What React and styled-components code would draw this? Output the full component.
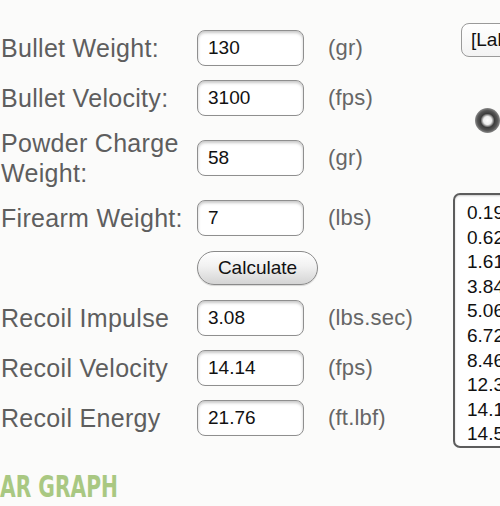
import styled, { createGlobalStyle } from "styled-components";

const GlobalStyle = createGlobalStyle`
  html, body {
    margin: 0;
    padding: 0;
    background: #fbfbfa;
    overflow: hidden;
  }
  body {
    font-family: "Liberation Sans", Arial, Helvetica, sans-serif;
  }
`;

const Page = styled.div`
  width: 500px;
  height: 506px;
  overflow: hidden;
`;

const Top = styled.div`
  display: flex;
  padding-top: 23px;
`;

const Form = styled.div`
  width: 453px;
  flex-shrink: 0;
`;

const Row = styled.div`
  display: grid;
  grid-template-columns: 197px 107px auto;
  align-items: center;
  min-height: 40px;
  padding: 5px 0;
`;

const Label = styled.div`
  padding-left: 1px;
  font-size: 25px;
  line-height: 30px;
  letter-spacing: 0.3px;
  color: #5e5e5e;
`;

const Field = styled.input`
  box-sizing: border-box;
  width: 107px;
  height: 36px;
  padding: 0 0 0 10px;
  border: 1px solid #8f8f8f;
  border-radius: 8px;
  background: #fff;
  box-shadow: inset 0 2px 3px rgba(0, 0, 0, 0.22);
  font-family: "Liberation Sans", Arial, sans-serif;
  font-size: 19px;
  color: #111;
  outline: none;
`;

const Unit = styled.span`
  margin-left: 24px;
  font-size: 22px;
  color: #666;
  letter-spacing: 0.2px;
`;

const CalcButton = styled.button`
  grid-column: 2 / span 2;
  justify-self: start;
  width: 121px;
  height: 34px;
  border: 1px solid #8a8a8a;
  border-radius: 17px;
  background: linear-gradient(#ffffff, #f1f1f1 45%, #d4d4d4);
  box-shadow: 0 1px 1px rgba(0, 0, 0, 0.15);
  font-family: "Liberation Sans", Arial, sans-serif;
  font-size: 19px;
  color: #111;
  padding: 0;
`;

const Side = styled.div`
  display: flex;
  flex-direction: column;
  align-items: flex-start;
`;

const Select = styled.div`
  box-sizing: border-box;
  margin-left: 8px;
  height: 34px;
  width: 120px;
  padding: 0 0 0 9px;
  border: 1px solid #9a9a9a;
  border-radius: 8px;
  background: linear-gradient(#ffffff, #f3f3f3);
  font-size: 19px;
  line-height: 32px;
  color: #111;
  white-space: nowrap;
`;

const Radio = styled.span`
  display: block;
  margin: 51px 0 0 22px;
  width: 25px;
  height: 25px;
  border-radius: 50%;
  background: radial-gradient(
    circle at 50% 50%,
    #ffffff 0,
    #eeeeee 4px,
    #9a9a9a 5.5px,
    #3c3c3c 7px,
    #555 10px,
    #8a8a8a 12.5px
  );
`;

const ListBox = styled.div`
  box-sizing: border-box;
  margin-top: 60px;
  width: 100px;
  height: 255px;
  padding: 6px 0 0 12px;
  border: 2px solid #5d5d5d;
  border-radius: 7px;
  background: #fff;
  box-shadow: inset 0 1px 2px rgba(0, 0, 0, 0.2);
  font-size: 19px;
  line-height: 24.6px;
  color: #111;
  white-space: nowrap;
`;

const Heading = styled.h2`
  margin: 22px 0 0 0;
  font-family: "DejaVu Sans Condensed", "Liberation Sans", sans-serif;
  font-weight: bold;
  font-size: 30px;
  line-height: 34px;
  color: #a9c882;
  transform: scaleX(0.75);
  transform-origin: left center;
  white-space: nowrap;
`;

const fields = [
  { label: "Bullet Weight:", value: "130", unit: "(gr)" },
  { label: "Bullet Velocity:", value: "3100", unit: "(fps)" },
  { label: <>Powder Charge<br />Weight:</>, value: "58", unit: "(gr)" },
  { label: "Firearm Weight:", value: "7", unit: "(lbs)" },
];

const results = [
  { label: "Recoil Impulse", value: "3.08", unit: "(lbs.sec)" },
  { label: "Recoil Velocity", value: "14.14", unit: "(fps)" },
  { label: "Recoil Energy", value: "21.76", unit: "(ft.lbf)" },
];

const listValues = ["0.19", "0.62", "1.61", "3.84", "5.06", "6.72", "8.46", "12.3", "14.1", "14.5"];

export default function App() {
  return (
    <Page>
      <GlobalStyle />
      <Top>
        <Form>
          {fields.map((f, i) => (
            <Row key={i}>
              <Label>{f.label}</Label>
              <Field defaultValue={f.value} />
              <Unit>{f.unit}</Unit>
            </Row>
          ))}
          <Row>
            <span />
            <CalcButton>Calculate</CalcButton>
          </Row>
          {results.map((f, i) => (
            <Row key={i}>
              <Label>{f.label}</Label>
              <Field defaultValue={f.value} readOnly />
              <Unit>{f.unit}</Unit>
            </Row>
          ))}
        </Form>
        <Side>
          <Select>[Label]</Select>
          <Radio />
          <ListBox>
            {listValues.map((v) => (
              <div key={v}>{v}</div>
            ))}
          </ListBox>
        </Side>
      </Top>
      <Heading>AR GRAPH</Heading>
    </Page>
  );
}
